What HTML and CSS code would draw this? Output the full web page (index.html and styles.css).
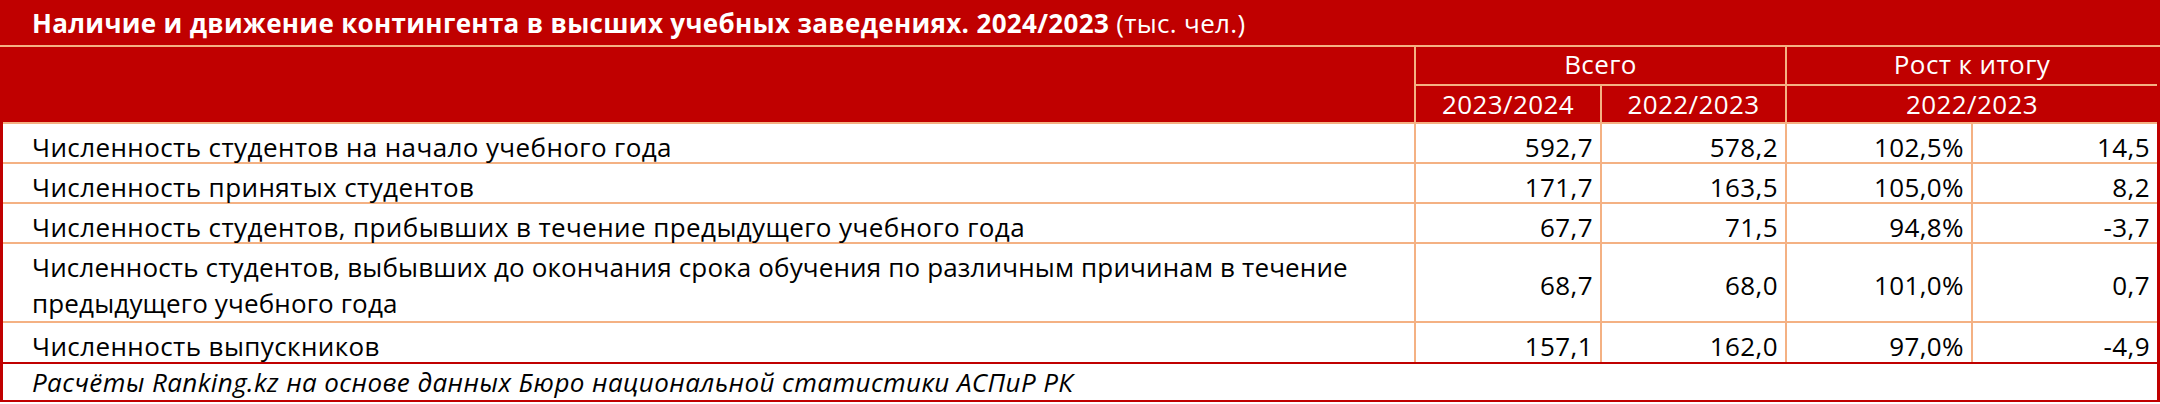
FILE: index.html
```html
<!DOCTYPE html>
<html lang="ru">
<head>
<meta charset="utf-8">
<title>Контингент вузов</title>
<link rel="stylesheet" href="styles.css">
</head>
<body>
<div class="sheet">
  <div class="title"><span class="title-main">Наличие и движение контингента в высших учебных заведениях. 2024/2023</span>&nbsp;(тыс. чел.)</div>
  <div class="grid">
    <div class="hc hc-label"></div>
    <div class="hc hc-top span2">Всего</div>
    <div class="hc hc-top span2">Рост к итогу</div>
    <div class="hc">2023/2024</div>
    <div class="hc">2022/2023</div>
    <div class="hc span2">2022/2023</div>

    <div class="lc">Численность студентов на начало учебного года</div>
    <div class="nc">592,7</div>
    <div class="nc">578,2</div>
    <div class="nc">102,5%</div>
    <div class="nc">14,5</div>

    <div class="lc">Численность принятых студентов</div>
    <div class="nc">171,7</div>
    <div class="nc">163,5</div>
    <div class="nc">105,0%</div>
    <div class="nc">8,2</div>

    <div class="lc">Численность студентов, прибывших в течение предыдущего учебного года</div>
    <div class="nc">67,7</div>
    <div class="nc">71,5</div>
    <div class="nc">94,8%</div>
    <div class="nc">-3,7</div>

    <div class="lc tall">Численность студентов, выбывших до окончания срока обучения по различным причинам в течение<br>предыдущего учебного года</div>
    <div class="nc tall">68,7</div>
    <div class="nc tall">68,0</div>
    <div class="nc tall">101,0%</div>
    <div class="nc tall">0,7</div>

    <div class="lc">Численность выпускников</div>
    <div class="nc">157,1</div>
    <div class="nc">162,0</div>
    <div class="nc">97,0%</div>
    <div class="nc">-4,9</div>
  </div>
  <div class="foot">Расчёты Ranking.kz на основе данных Бюро национальной статистики АСПиР РК</div>
</div>
</body>
</html>
```

FILE: styles.css
```css
html, body {
  margin: 0;
  padding: 0;
  background: #ffffff;
}

.sheet {
  width: 2160px;
  height: 404px;
  background: #ffffff;
  font-family: "Open Sans", "Noto Sans", sans-serif;
  font-size: 26px;
  letter-spacing: 0.4px;
  color: #000000;
  overflow: hidden;
}

.title {
  height: 45px;
  box-sizing: content-box;
  background: #c00000;
  color: #ffffff;
  border-bottom: 2px solid #f4b183;
  padding-left: 32px;
  display: flex;
  align-items: center;
  white-space: nowrap;
  line-height: 36px;
  letter-spacing: 0.33px;
}

.title-main {
  font-weight: 700;
}

.grid {
  display: grid;
  grid-template-columns: 1411px 184px 183px 184px 184px;
  grid-template-rows: 37px 36px 38px 38px 38px 77px 39px;
  gap: 2px;
  background: #f4b183;
  border-left: 3px solid #c00000;
  border-right: 3px solid #c00000;
}

.hc {
  background: #c00000;
  color: #ffffff;
  display: flex;
  align-items: center;
  justify-content: center;
  line-height: 36px;
  white-space: nowrap;
}

.hc-top {
  padding-bottom: 4px;
}

.hc-label {
  grid-row: span 2;
}

.span2 {
  grid-column: span 2;
}

.lc,
.nc {
  background: #ffffff;
  line-height: 30px;
  padding-top: 8px;
  white-space: nowrap;
}

.lc {
  padding-left: 29px;
}

.nc {
  text-align: right;
  padding-right: 7px;
}

.lc.tall {
  padding-top: 5px;
  line-height: 36px;
  letter-spacing: 0.15px;
}

.nc.tall {
  padding-top: 26px;
}

.foot {
  height: 36px;
  border: 2px solid #c00000;
  border-left-width: 3px;
  border-right-width: 3px;
  padding-left: 29px;
  font-style: italic;
  line-height: 36px;
  white-space: nowrap;
}
```
